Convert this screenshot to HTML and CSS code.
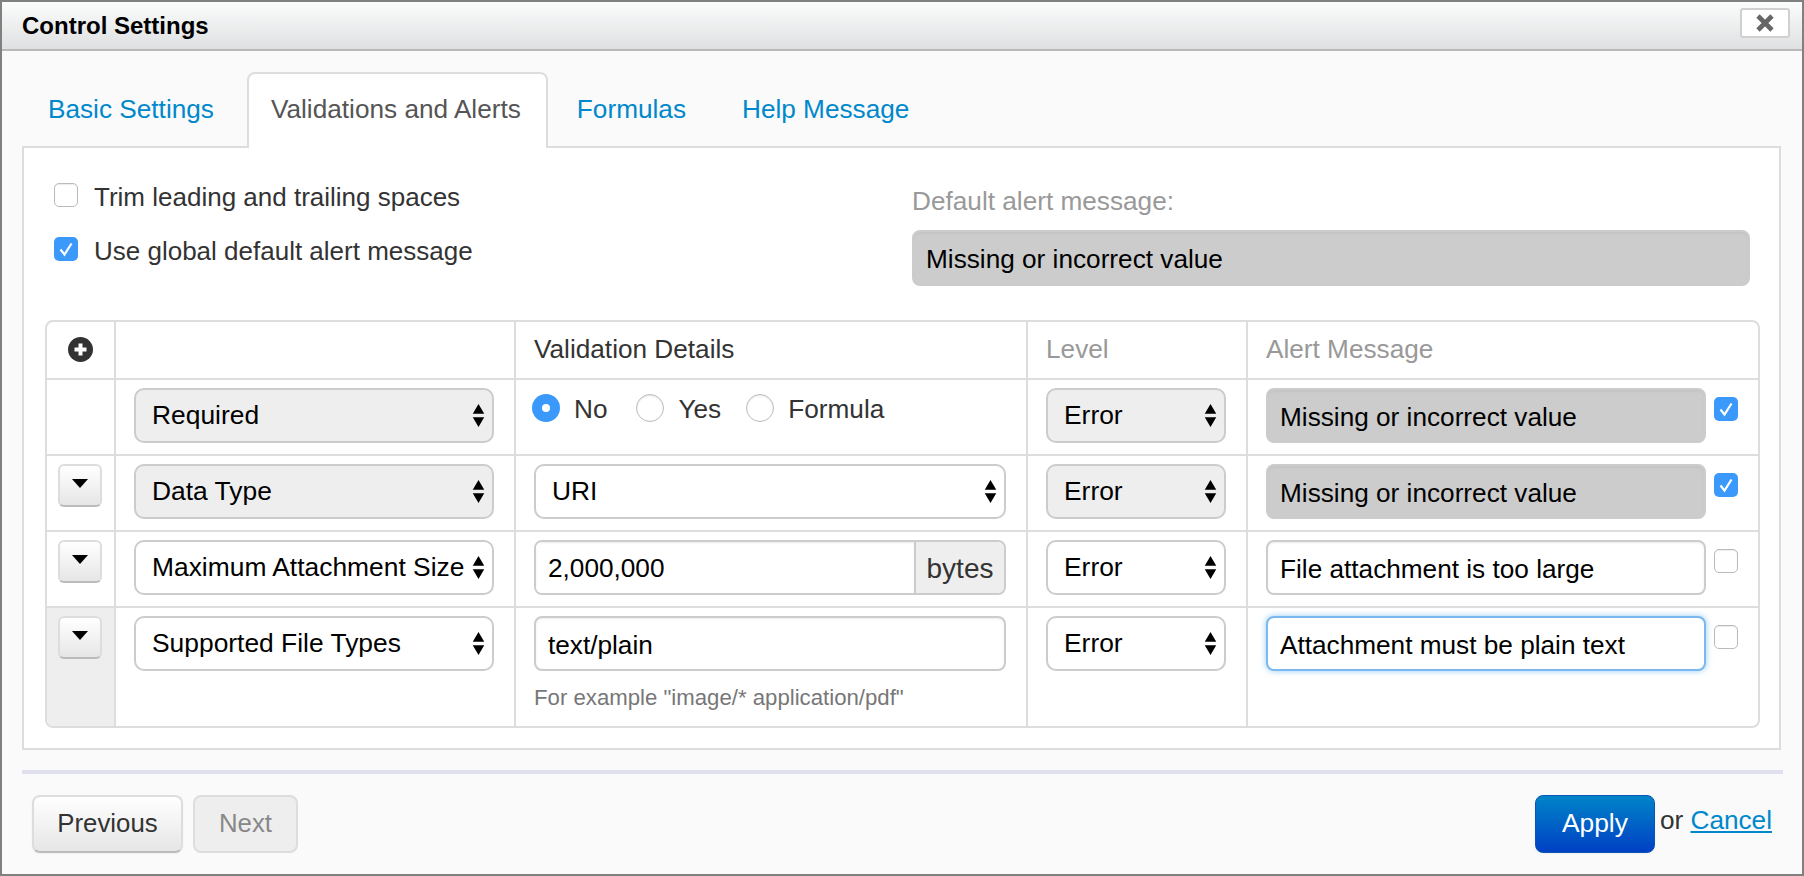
FILE: index.html
```html
<!DOCTYPE html>
<html lang="en">
<head>
<meta charset="utf-8">
<title>Control Settings</title>
<link rel="stylesheet" href="styles.css">
</head>
<body>
<svg class="defs" width="0" height="0" aria-hidden="true">
  <symbol id="updown" viewBox="0 0 14 26"><path d="M7 0 13.500 11H.5zM7 26 .5 15h13z"/></symbol>
  <symbol id="check" viewBox="0 0 24 24"><path d="M6.500 12.500 10.500 17.500 17.500 6.500" fill="none" stroke="#fff" stroke-width="2.200"/></symbol>
  <symbol id="caret" viewBox="0 0 16 9"><path d="M0 0h16L8 9z"/></symbol>
</svg>
<main class="dialog">
  <header class="titlebar">
    <h1 class="title">Control Settings</h1>
    <button class="close" type="button" aria-label="Close">
      <svg width="20" height="18" viewBox="0 0 20 18"><path d="M3 2 17 16M17 2 3 16" stroke="#666" stroke-width="4.600" fill="none"/></svg>
    </button>
  </header>
  <div class="body">
    <nav class="tabs">
      <a class="tab">Basic Settings</a>
      <a class="tab active">Validations and Alerts</a>
      <a class="tab">Formulas</a>
      <a class="tab">Help Message</a>
    </nav>
    <section class="panel">
      <div class="options">
        <div class="checks">
          <label class="check-row"><span class="cb"></span><span class="check-text">Trim leading and trailing spaces</span></label>
          <label class="check-row"><span class="cb on"><svg width="24" height="24"><use href="#check"/></svg></span><span class="check-text">Use global default alert message</span></label>
        </div>
        <div class="default-alert">
          <div class="muted-label">Default alert message:</div>
          <div class="field disabled wide">Missing or incorrect value</div>
        </div>
      </div>
      <div class="grid">
        <div class="cell head first"><svg width="25" height="25" viewBox="0 0 25 25"><circle cx="12.500" cy="12.500" r="12.500" fill="#333"/><path d="M12.500 6.500v12M6.500 12.500h12" stroke="#fff" stroke-width="4"/></svg></div>
        <div class="cell head"></div>
        <div class="cell head label">Validation Details</div>
        <div class="cell head label muted">Level</div>
        <div class="cell head label muted end">Alert Message</div>

        <div class="cell"></div>
        <div class="cell"><div class="select grey"><span>Required</span><svg class="ud"><use href="#updown"/></svg></div></div>
        <div class="cell radios">
          <span class="radio on"></span><span class="radio-text">No</span>
          <span class="radio"></span><span class="radio-text">Yes</span>
          <span class="radio"></span><span class="radio-text">Formula</span>
        </div>
        <div class="cell"><div class="select grey"><span>Error</span><svg class="ud"><use href="#updown"/></svg></div></div>
        <div class="cell alert end"><div class="field disabled">Missing or incorrect value</div><span class="cb on small"><svg width="24" height="24"><use href="#check"/></svg></span></div>

        <div class="cell"><button class="expand" type="button"><svg width="16" height="9"><use href="#caret"/></svg></button></div>
        <div class="cell"><div class="select grey"><span>Data Type</span><svg class="ud"><use href="#updown"/></svg></div></div>
        <div class="cell"><div class="select"><span>URI</span><svg class="ud"><use href="#updown"/></svg></div></div>
        <div class="cell"><div class="select grey"><span>Error</span><svg class="ud"><use href="#updown"/></svg></div></div>
        <div class="cell alert end"><div class="field disabled">Missing or incorrect value</div><span class="cb on small"><svg width="24" height="24"><use href="#check"/></svg></span></div>

        <div class="cell"><button class="expand" type="button"><svg width="16" height="9"><use href="#caret"/></svg></button></div>
        <div class="cell"><div class="select"><span>Maximum Attachment Size</span><svg class="ud"><use href="#updown"/></svg></div></div>
        <div class="cell"><div class="input-group"><div class="group-value">2,000,000</div><div class="addon">bytes</div></div></div>
        <div class="cell"><div class="select"><span>Error</span><svg class="ud"><use href="#updown"/></svg></div></div>
        <div class="cell alert end"><div class="field">File attachment is too large</div><span class="cb small"></span></div>

        <div class="cell last shaded"><button class="expand" type="button"><svg width="16" height="9"><use href="#caret"/></svg></button></div>
        <div class="cell last"><div class="select"><span>Supported File Types</span><svg class="ud"><use href="#updown"/></svg></div></div>
        <div class="cell last"><div class="field">text/plain</div><div class="hint">For example "image/* application/pdf"</div></div>
        <div class="cell last"><div class="select"><span>Error</span><svg class="ud"><use href="#updown"/></svg></div></div>
        <div class="cell last alert end"><div class="field focus">Attachment must be plain text</div><span class="cb small"></span></div>
      </div>
    </section>
    <hr class="rule">
    <footer class="footer">
      <div class="nav-buttons">
        <button class="btn" type="button">Previous</button>
        <button class="btn off" type="button">Next</button>
      </div>
      <div class="actions">
        <button class="btn primary" type="button">Apply</button>
        <span class="or">or <a class="cancel">Cancel</a></span>
      </div>
    </footer>
  </div>
</main>
</body>
</html>
```
FILE: styles.css
```css
* { box-sizing: border-box; }
html, body { margin: 0; padding: 0; }
body { font-family: "Liberation Sans", Arial, sans-serif; font-size: 26.2px; color: #333; background: #fff; overflow: hidden; }
.defs { position: absolute; }

.dialog { width: 1804px; height: 876px; border: 2px solid #808080; background: #fafafa; display: flex; flex-direction: column; }

.titlebar { height: 49px; flex: none; display: flex; align-items: center; justify-content: space-between; padding: 0 12px 0 20px; background: linear-gradient(#fbfcfc, #dfe0e1); border-bottom: 2px solid #b8b9ba; }
.title { margin: 0; font-size: 24px; font-weight: bold; color: #000; }
.close { width: 50px; height: 30px; padding: 0; display: flex; align-items: center; justify-content: center; background: #fff; border: 2px solid #d0d0d0; border-radius: 3px; margin-top: -6px; }

.body { flex: 1; display: flex; flex-direction: column; padding: 0 21px 0 20px; }

.tabs { display: flex; margin-top: 21px; margin-bottom: -2px; padding-left: 1px; position: relative; z-index: 1; }
.tab { height: 76px; padding: 19px 23px 0; border: 2px solid transparent; border-bottom: 0; margin-right: 8px; color: #0088cc; line-height: 32px; border-radius: 8px 8px 0 0; }
.tab.active { background: #fff; color: #555; border-color: #ddd; padding: 19px 25px 0 22px; margin-right: 4px; }
.tab:nth-child(3) { margin-right: 6px; }

.panel { height: 604px; flex: none; border: 2px solid #ddd; background: #fff; padding: 0 20px; }
.options { height: 172px; display: flex; justify-content: space-between; }
.checks { padding: 35px 0 0 10px; display: flex; flex-direction: column; gap: 30px; }
.check-row { display: flex; align-items: center; gap: 16px; height: 24px; color: #333; }
.check-text { position: relative; top: 2px; font-size: 26px; }
.cb { display: block; flex: none; width: 24px; height: 24px; border-radius: 5px; background: #fff; border: 1.500px solid #bbb; box-shadow: inset 0 1px 1px rgba(0,0,0,.08); }
.cb.on { background: #3b99fc; border: 0; box-shadow: none; }
.cb svg { display: block; }
.cb.small { margin: 9px 0 0 8px; }
.default-alert { width: 838px; margin-right: 9px; padding-top: 38px; }
.muted-label { color: #999; line-height: 30px; height: 44px; }

.field { height: 55px; border: 2px solid #ccc; border-radius: 8px; padding: 0 12px; background: #fff; color: #000; line-height: 54px; box-shadow: inset 0 1px 2px rgba(0,0,0,.08); white-space: nowrap; }
.field.disabled { background: #ccc; border-color: #ccc; box-shadow: inset 0 2px 2px rgba(0,0,0,.04); }
.field.wide { height: 56px; line-height: 54px; }
.field.focus { border-color: #7ab8f0; box-shadow: 0 0 6px rgba(82,168,236,.6); }

.grid { display: grid; width: 1715px; grid-template-columns: 69px 400px 512px 220px 1fr; grid-template-rows: 58px 76px 76px 76px 118px; border: 2px solid #ddd; border-radius: 8px; overflow: hidden; margin-left: 1px; }
.cell { border-right: 2px solid #ddd; border-bottom: 2px solid #ddd; padding: 8px 20px 0 18px; }
.cell.end { border-right: 0; }
.cell.last { border-bottom: 0; }
.cell.shaded { background: #eee; }
.cell.head { display: flex; align-items: center; padding-top: 0; padding-bottom: 2px; }
.cell.label { color: #333; }
.cell.muted { color: #999; }
.cell:nth-child(5n+1) { padding: 8px 0 0 11px; }
.cell.head.first { padding: 0 0 2px 21px; }
.cell.alert { display: flex; padding-right: 0; }
.cell.alert .field { flex: none; width: 440px; }

.select { height: 55px; border: 2px solid #ccc; border-radius: 10px; padding: 0 7px 0 16px; display: flex; align-items: center; justify-content: space-between; background: #fff; color: #000; white-space: nowrap; font-size: 26.4px; }
.select.grey { background: #eee; }
.ud { width: 13px; height: 23px; flex: none; }

.radios { display: flex; align-items: flex-start; padding-top: 14px; padding-left: 16px; }
.radio { display: block; flex: none; width: 28px; height: 28px; border-radius: 50%; background: #fff; border: 1.500px solid #bbb; box-shadow: inset 0 1px 2px rgba(0,0,0,.1); }
.radio.on { background: #3b99fc; border: 0; box-shadow: none; position: relative; }
.radio.on::after { content: ""; position: absolute; left: 10px; top: 10px; width: 8px; height: 8px; border-radius: 50%; background: #fff; }
.radio-text { color: #333; margin: 0 29px 0 14px; line-height: 30px; }
.radio-text:nth-child(4) { margin-right: 25px; }

.expand { width: 44px; height: 43px; padding: 0; border: 2px solid #ddd; border-bottom-color: #bbb; border-radius: 6px; background: linear-gradient(#fff, #e6e6e6); display: flex; align-items: center; justify-content: center; color: #000; }
.expand svg { margin-top: -4px; }

.input-group { height: 55px; display: flex; border: 2px solid #ccc; border-radius: 8px; overflow: hidden; }
.group-value { flex: 1; padding: 0 12px; line-height: 53px; color: #000; background: #fff; box-shadow: inset 0 1px 2px rgba(0,0,0,.08); }
.addon { width: 90px; background: #eee; border-left: 2px solid #ccc; text-align: center; line-height: 52px; color: #333; padding-top: 1px; font-size: 28px; }
.hint { font-size: 22.2px; color: #777; margin-top: 13px; line-height: 28px; white-space: nowrap; }

.rule { width: 1761px; height: 4px; border: 0; background: #dfdfee; margin: 20px 0 0 0; flex: none; }

.footer { display: flex; justify-content: space-between; margin-top: 21px; padding: 0 9px 0 10px; }
.nav-buttons { display: flex; gap: 10px; }
.actions { display: flex; align-items: flex-start; gap: 5px; }
.btn { height: 58px; font: inherit; font-size: 25.8px; padding: 0 0 2px; width: 151px; color: #333; border: 2px solid #ddd; border-bottom-color: #bbb; border-radius: 8px; background: linear-gradient(#fff, #e6e6e6); box-shadow: 0 1px 2px rgba(0,0,0,.05); }
.btn.off { width: 105px; background: #eee; color: #888; border-color: #ddd; box-shadow: none; }
.btn.primary { width: 120px; font-size: 26.4px; color: #fff; background: linear-gradient(#0084c8, #0040c4); border: 1px solid #0a55b5; }
.or { line-height: 50px; color: #333; }
.cancel { color: #0088cc; text-decoration: underline; }
```
